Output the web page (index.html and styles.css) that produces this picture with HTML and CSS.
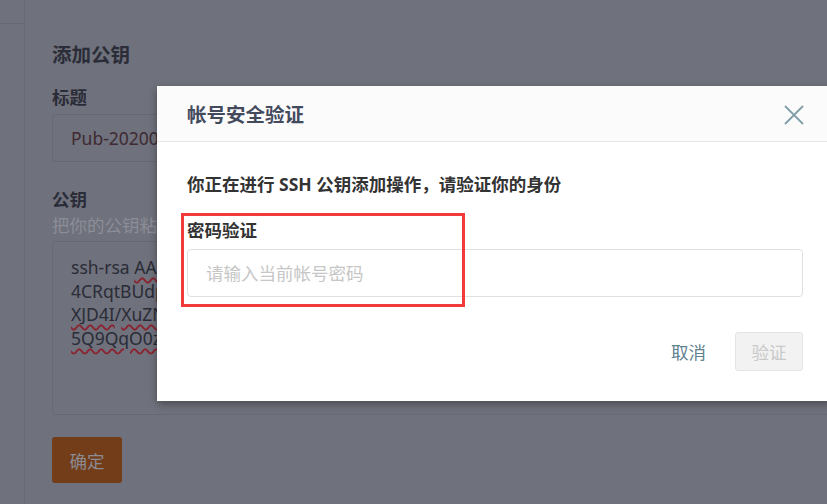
FILE: index.html
```html
<!DOCTYPE html>
<html lang="zh-CN">
<head>
<meta charset="utf-8">
<title>帐号安全验证</title>
<link rel="stylesheet" href="styles.css">
</head>
<body>
<div class="page">
  <aside class="sidebar"><div class="sidebar-top"></div></aside>
  <main class="main">
    <h2 class="page-title">添加公钥</h2>
    <div class="field-label">标题</div>
    <div class="fake-input">Pub-20200512103244</div>
    <div class="field-label key-label">公钥</div>
    <div class="hint">把你的公钥粘贴到这里，公钥通常以 ssh-rsa 开头</div>
    <div class="fake-textarea">
      <div class="line">ssh-rsa <span class="sq">AAAAB3NzaC1yc2EAAAADAQABAAABAQC</span></div>
      <div class="line">4CRqtBUdpH8mT2wK5nLzQvE7xYc0aJ9sR</div>
      <div class="line"><span class="sq">XJD4I</span>/<span class="sq">XuZNpQ8rLk3vWmTz</span></div>
      <div class="line"><span class="sq">5Q9QqO0zYhVb2Nc7</span></div>
    </div>
    <button class="btn-primary">确定</button>
  </main>
</div>

<div class="modal">
  <div class="modal-header">
    <span class="modal-title">帐号安全验证</span>
    <svg class="close" width="20" height="20" viewBox="0 0 20 20"><path d="M1 1L19 19M19 1L1 19" stroke="#7f9ea8" stroke-width="1.8" fill="none"/></svg>
  </div>
  <div class="modal-body">
    <p class="desc">你正在进行 SSH 公钥添加操作，请验证你的身份</p>
    <label class="pw-label">密码验证</label>
    <input class="pw-input" type="password" placeholder="请输入当前帐号密码">
  </div>
  <div class="modal-footer">
    <span class="btn-cancel">取消</span>
    <span class="btn-verify">验证</span>
  </div>
  <div class="highlight"></div>
</div>
</body>
</html>
```

FILE: styles.css
```css
html, body {
  margin: 0;
  padding: 0;
  height: 100%;
  overflow: hidden;
}
body {
  background: #6f717c;
  font-family: "Noto Sans", "Noto Sans CJK SC", sans-serif;
  position: relative;
}
.page {
  display: flex;
  height: 100%;
}
.sidebar {
  width: 24px;
  flex: none;
  border-right: 1px solid #676974;
}
.sidebar-top {
  height: 23px;
  border-bottom: 1px solid #676974;
}
.main {
  padding: 41px 0 0 27px;
  width: 900px;
  flex: none;
  display: flex;
  flex-direction: column;
  align-items: flex-start;
}
.page-title {
  margin: 0;
  font-size: 19.5px;
  line-height: 28px;
  font-weight: 700;
  color: #2a2c37;
}
.field-label {
  margin-top: 15px;
  font-size: 17.5px;
  line-height: 26px;
  font-weight: 700;
  color: #2a2c37;
}
.key-label {
  margin-top: 24px;
}
.fake-input {
  margin-top: 4px;
  box-sizing: border-box;
  width: 100%;
  height: 48px;
  border: 1px solid #666874;
  border-radius: 4px;
  padding: 0 18px;
  display: flex;
  align-items: center;
  font-size: 17.5px;
  color: #3e2a31;
}
.hint {
  margin-top: 1px;
  font-size: 17.5px;
  line-height: 24px;
  color: #8b8d97;
  white-space: nowrap;
}
.fake-textarea {
  margin-top: 4px;
  box-sizing: border-box;
  width: 100%;
  height: 174px;
  border: 1px solid #666874;
  border-radius: 4px;
  padding: 14px 18px;
  font-size: 17.5px;
  line-height: 23.5px;
  color: #2a2c37;
  overflow: hidden;
}
.line {
  white-space: nowrap;
}
.sq {
  text-decoration: underline wavy #8a2430;
  text-decoration-thickness: 1.5px;
  text-underline-offset: 3px;
}
.btn-primary {
  margin-top: 22px;
  width: 70px;
  height: 46px;
  border: none;
  border-radius: 3px;
  background: #723d18;
  color: #8c8a92;
  font-family: inherit;
  font-size: 17.5px;
  padding: 0;
}

.modal {
  position: absolute;
  left: 157px;
  top: 86px;
  width: 676px;
  background: #fff;
  box-shadow: 0 3px 8px rgba(0, 0, 0, 0.35);
}
.modal-header {
  height: 56px;
  box-sizing: border-box;
  padding: 0 29px 0 30px;
  background: #fbfbfc;
  border-bottom: 1px solid #e5e5e8;
  display: flex;
  align-items: center;
  justify-content: space-between;
}
.modal-title {
  font-size: 19.5px;
  font-weight: 700;
  color: #434a5c;
}
.close {
  display: block;
  margin-top: 2px;
}
.modal-body {
  padding: 29px 30px 0;
  display: flex;
  flex-direction: column;
}
.desc {
  margin: 0;
  font-size: 17.5px;
  line-height: 26px;
  font-weight: 700;
  color: #333;
}
.pw-label {
  margin-top: 20px;
  font-size: 17.5px;
  line-height: 26px;
  font-weight: 700;
  color: #333;
}
.pw-input {
  margin-top: 6px;
  box-sizing: border-box;
  height: 48px;
  width: 100%;
  border: 1px solid #e0e0e4;
  border-radius: 4px;
  padding: 0 18px;
  font-family: inherit;
  font-size: 17.5px;
  outline: none;
}
.pw-input::placeholder {
  color: #c6c6c6;
}
.modal-footer {
  padding: 35px 30px 30px;
  display: flex;
  justify-content: flex-end;
  align-items: center;
  gap: 29px;
}
.btn-cancel {
  font-size: 17.5px;
  color: #5e8190;
}
.btn-verify {
  box-sizing: border-box;
  width: 68px;
  height: 39px;
  display: flex;
  align-items: center;
  justify-content: center;
  background: #f2f2f2;
  border: 1px solid #e4e4e4;
  border-radius: 3px;
  font-size: 17.5px;
  color: #c9c9c9;
}
.highlight {
  position: absolute;
  left: 24px;
  top: 127px;
  width: 284px;
  height: 94px;
  box-sizing: border-box;
  border: 3px solid #f03a3c;
  pointer-events: none;
}
```
